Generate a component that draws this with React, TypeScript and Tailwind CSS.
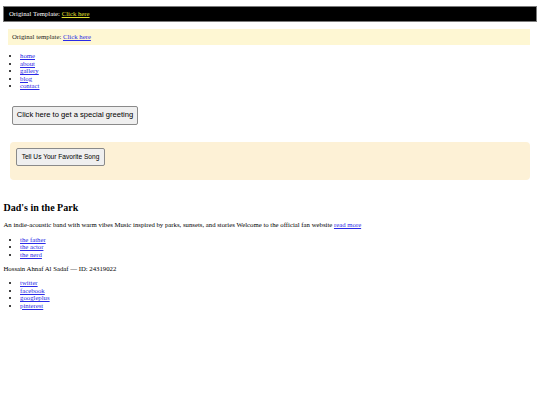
export default function App() {
  const serif = "font-['Liberation_Serif',_'Times_New_Roman',_serif]";
  const sans = "font-['Liberation_Sans',_Arial,_sans-serif]";
  const link = 'underline text-[#2a2ae6]';
  return (
    <div className={`${serif} text-[6.75px] leading-[7.5px] text-black bg-white min-h-screen pt-[6px]`}>
      <div className="mx-[3px] h-[16px] border border-[#7a7a7a] bg-black text-white flex items-center px-[5px]">
        <span>
          Original Template: <a href="#" className="underline text-[#e0e030]">Click here</a>
        </span>
      </div>

      <div className="mt-[7px] ml-[8px] mr-[10px] h-[16px] bg-[#fef7d3] flex items-center px-[4px] text-[#222]">
        <span>
          Original template: <a href="#" className={link}>Click here</a>
        </span>
      </div>

      <ul className="list-disc mt-[7px] ml-[3.5px] pl-[16.5px]">
        <li><a href="#" className={link}>home</a></li>
        <li><a href="#" className={link}>about</a></li>
        <li><a href="#" className={link}>gallery</a></li>
        <li><a href="#" className={link}>blog</a></li>
        <li><a href="#" className={link}>contact</a></li>
      </ul>

      <button className={`${sans} mt-[16px] ml-[12px] h-[19px] w-[126px] text-[7.6px] bg-[#efefef] border border-[#8a8a8a] rounded-[2px] text-black`}>
        Click here to get a special greeting
      </button>

      <div className="mt-[17px] ml-[10px] mr-[10px] h-[38px] rounded-[4px] bg-[#fdf1d6] pt-[6px] px-[6px]">
        <button className={`${sans} h-[18px] w-[89px] text-[6.6px] bg-[#efefef] border border-[#8a8a8a] rounded-[2px] text-black`}>
          Tell Us Your Favorite Song
        </button>
      </div>

      <div className="px-[3.5px]">
        <h2 className="text-[10px] leading-[11.5px] font-bold mt-[22px]">Dad's in the Park</h2>
        <p className="mt-[8px]">
          An indie-acoustic band with warm vibes Music inspired by parks, sunsets, and stories Welcome to the official fan website{' '}
          <a href="#" className={link}>read more</a>
        </p>
        <ul className="list-disc mt-[7px] pl-[16.5px]">
          <li><a href="#" className={link}> the father</a></li>
          <li><a href="#" className={link}> the actor</a></li>
          <li><a href="#" className={link}> the nerd</a></li>
        </ul>
        <p className="mt-[6.5px]">Hossain Ahnaf Al Sadaf — ID: 24319022</p>
        <ul className="list-disc mt-[7px] pl-[16.5px]">
          <li><a href="#" className={link}>twitter</a></li>
          <li><a href="#" className={link}>facebook</a></li>
          <li><a href="#" className={link}>googleplus</a></li>
          <li><a href="#" className={link}>pinterest</a></li>
        </ul>
      </div>
    </div>
  );
}
